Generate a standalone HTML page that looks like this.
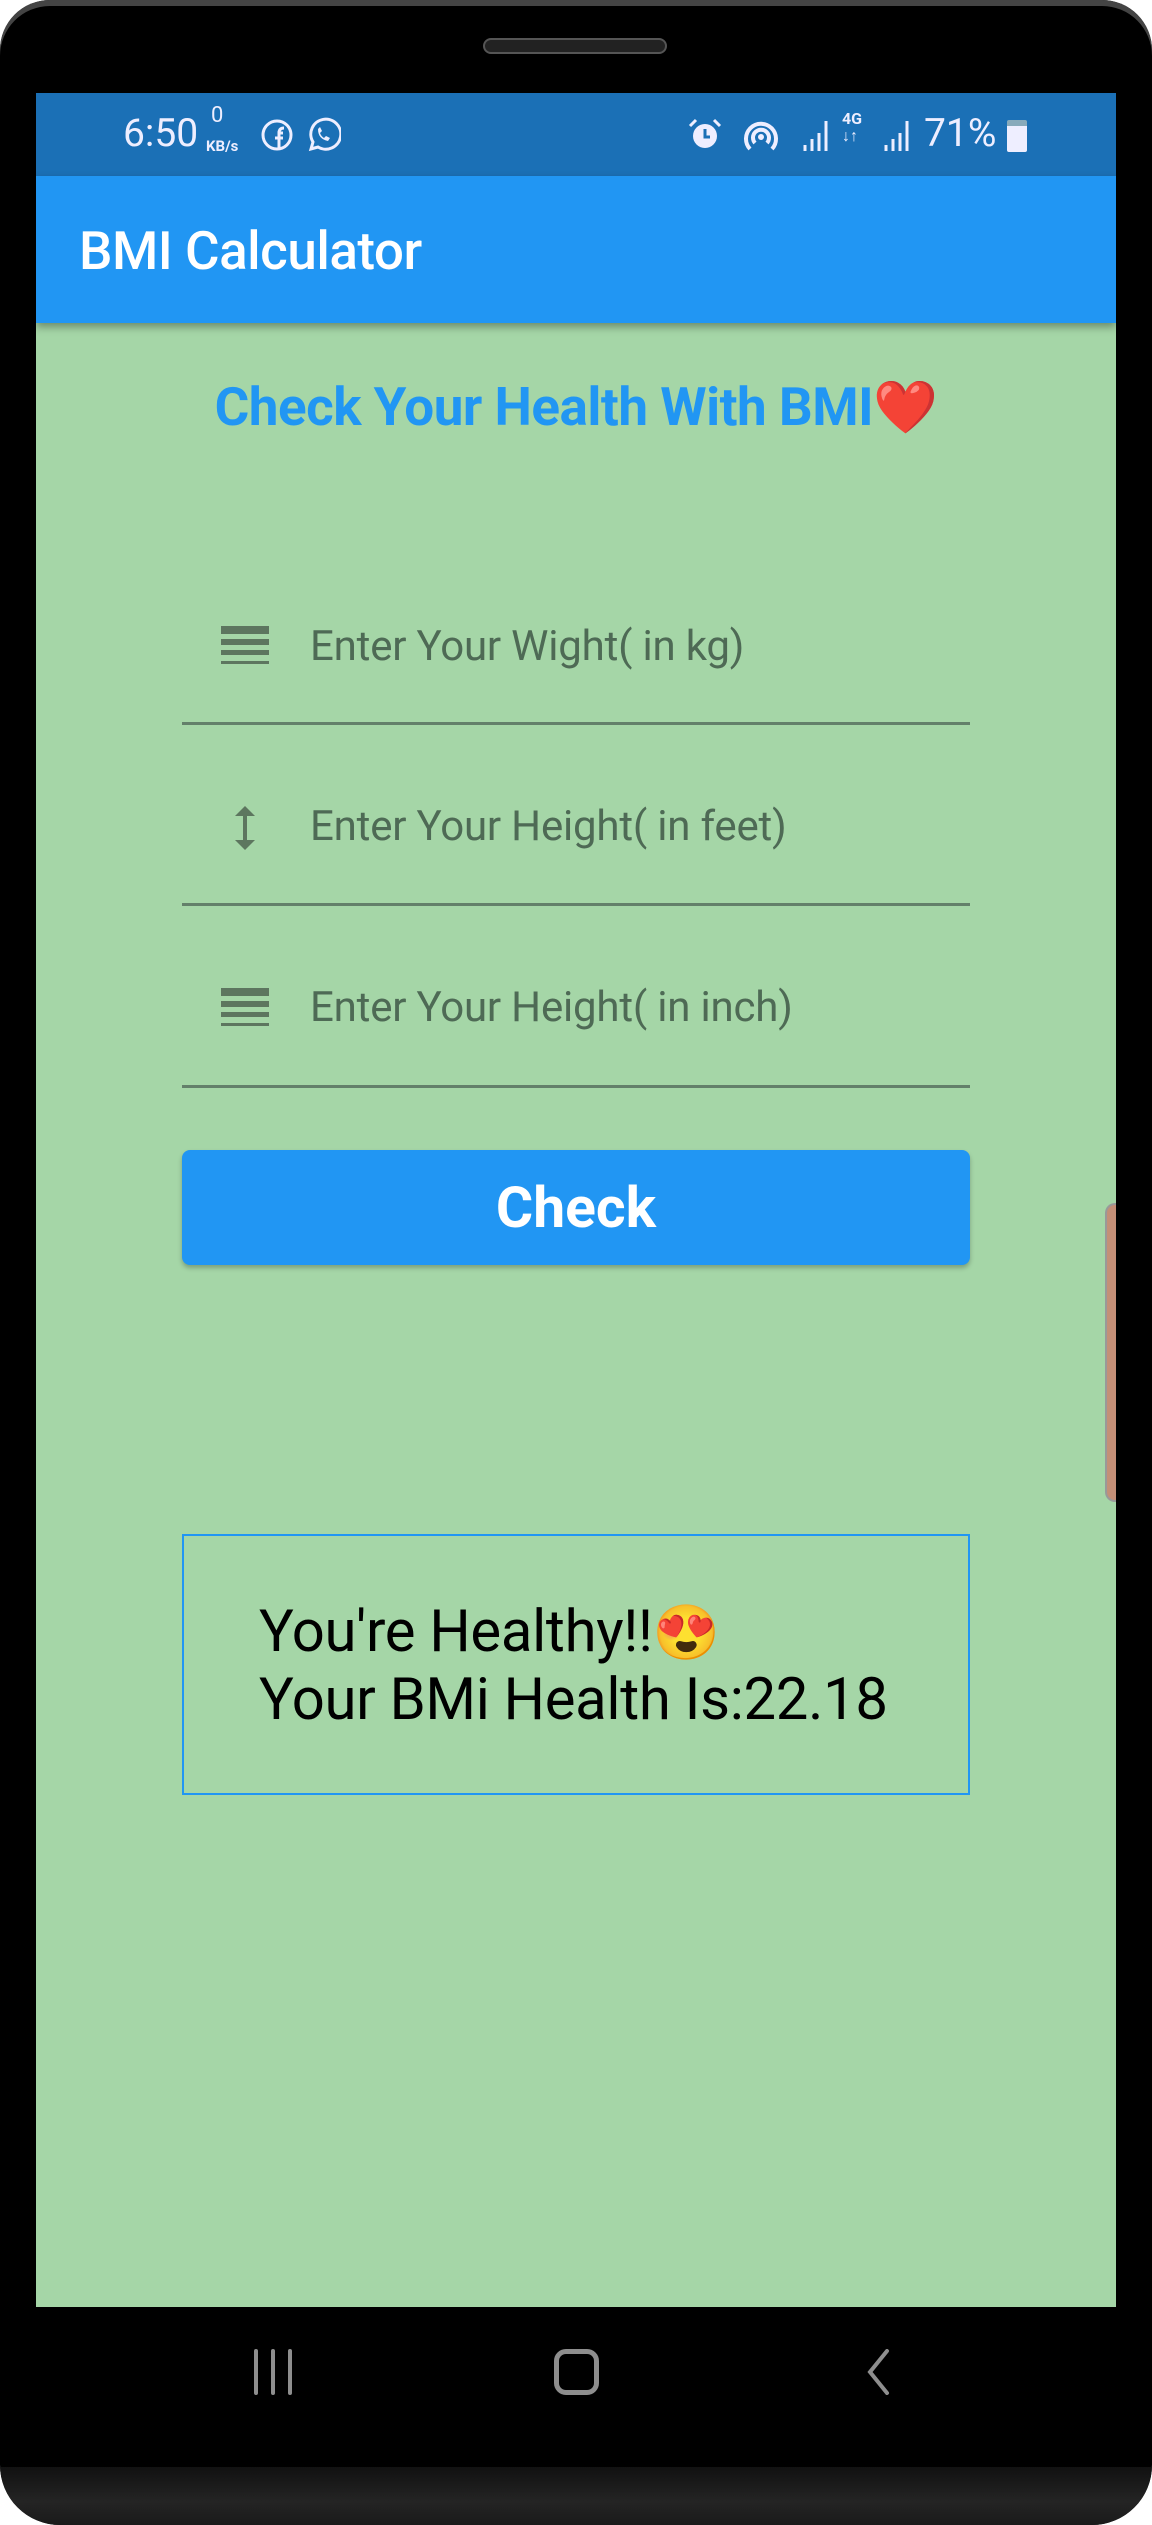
<!DOCTYPE html>
<html><head><meta charset="utf-8"><style>
*{margin:0;padding:0;box-sizing:border-box}
body{width:1152px;height:2525px;background:#fff;position:relative;overflow:hidden;font-family:"Roboto","Liberation Sans",sans-serif}
.frame{position:absolute;left:0;top:0;width:1152px;height:2525px;background:#000;border-radius:50px 50px 60px 60px;box-shadow:inset 0 6px 0 #444;overflow:hidden}
.chin{position:absolute;left:0;top:2467px;width:1152px;height:58px;background:linear-gradient(#111,#242424 60%,#1a1a1a)}
.spk{position:absolute;left:483px;top:38px;width:184px;height:16px;border-radius:8px;background:#222;border:2px solid #555}
.status{position:absolute;left:36px;top:93px;width:1080px;height:83px;background:#1b70b6;color:#eef;font-size:39px}
.appbar{position:absolute;left:36px;top:176px;width:1080px;height:147px;background:#2196f3;box-shadow:0 4px 8px rgba(0,0,0,.35);z-index:2}
.appbar span{position:absolute;left:43px;top:44px;color:#fff;font-size:53px;font-weight:500;letter-spacing:-0.5px}
.body{position:absolute;left:36px;top:323px;width:1080px;height:1984px;background:#a5d6a7}
.title{position:absolute;left:0;width:1152px;top:376px;text-align:center;color:#2196f3;font-weight:bold;font-size:53px;letter-spacing:-0.5px}
.field{position:absolute;left:182px;width:788px;border-bottom:3px solid #63806a;height:0}
.ph{position:absolute;left:310px;color:#4e6a55;font-size:42px;letter-spacing:-0.2px}
.btn{position:absolute;left:182px;top:1150px;width:788px;height:115px;background:#2196f3;border-radius:8px;box-shadow:0 3px 5px rgba(0,0,0,.25);color:#fff;font-weight:bold;font-size:57px;text-align:center;line-height:115px}
.res{position:absolute;left:182px;top:1534px;width:788px;height:261px;border:2px solid #2196f3}
.res div{position:absolute;left:75px;font-size:58px;color:#000;letter-spacing:-0.3px}
.tab{position:absolute;left:1105px;top:1203px;width:11px;height:299px;background:#c48f77;border-radius:10px 0 0 10px;border:2px solid #999;border-right:none}
.em{font-family:"Noto Color Emoji",sans-serif}
</style></head><body>
<div class="frame">
<div class="spk"></div>
<div class="status">
<span style="position:absolute;left:87px;top:17px">6:50</span>
<span style="position:absolute;left:175px;top:10px;font-size:22px">0</span>
<span style="position:absolute;left:170px;top:44px;font-size:15px;font-weight:bold">KB/s</span>
<svg style="position:absolute;left:224px;top:25px" width="34" height="34" viewBox="0 0 34 34"><circle cx="17" cy="17" r="14" fill="none" stroke="#eef" stroke-width="3"/><path d="M19 30V15h4M15 20h8M19 15q0-5 5-5" fill="none" stroke="#eef" stroke-width="3"/></svg>
<svg style="position:absolute;left:269px;top:24px" width="36" height="36" viewBox="0 0 36 36"><path d="M6 32l2-7a15 15 0 1 1 5 5z" fill="none" stroke="#eef" stroke-width="3"/><path d="M13 12q0 10 10 12l2-3-4-2-2 2q-3-2-4-5l2-2-2-4z" fill="#eef"/></svg>
<svg style="position:absolute;left:651px;top:24px" width="36" height="36" viewBox="0 0 36 36"><circle cx="18" cy="19" r="12" fill="#eef"/><path d="M18 12v8h5" stroke="#1b70b6" stroke-width="3" fill="none"/><path d="M3 9l6-6M33 9l-6-6" stroke="#eef" stroke-width="3"/></svg>
<svg style="position:absolute;left:705px;top:22px" width="40" height="40" viewBox="0 0 40 40"><path d="M9 34A15 15 0 1 1 31 34" fill="none" stroke="#eef" stroke-width="4"/><path d="M14 28A8 8 0 1 1 26 28" fill="none" stroke="#eef" stroke-width="4"/><circle cx="20" cy="22" r="3" fill="#eef"/></svg>
<svg style="position:absolute;left:766px;top:24px" width="28" height="36" viewBox="0 0 28 36"><path d="M3 34v-6M10 34v-12M17 34v-18M24 34V4" stroke="#eef" stroke-width="3"/></svg>
<span style="position:absolute;left:806px;top:17px;font-size:16px;font-weight:bold;line-height:17px">4G<br>↓↑</span>
<svg style="position:absolute;left:847px;top:24px" width="28" height="36" viewBox="0 0 28 36"><path d="M3 34v-6M10 34v-12M17 34v-18M24 34V4" stroke="#eef" stroke-width="3"/></svg>
<span style="position:absolute;left:888px;top:17px">71%</span>
<div style="position:absolute;left:971px;top:27px;width:20px;height:32px;background:#eef;border-radius:2px;border-top:6px solid #8ab"></div>
</div>
<div class="appbar"><span>BMI Calculator</span></div>
<div class="body"></div>
<div class="title">Check Your Health With BMI<span class="em" style="font-size:52px">❤️</span></div>

<svg style="position:absolute;left:221px;top:626px" width="48" height="44" viewBox="0 0 48 44"><rect x="0" y="0" width="48" height="8" fill="#5d765f"/><rect x="0" y="13" width="48" height="6" fill="#5d765f"/><rect x="0" y="24" width="48" height="5" fill="#5d765f"/><rect x="0" y="35" width="48" height="3" fill="#5d765f"/></svg>
<div class="ph" style="top:622px">Enter Your Wight( in kg)</div>
<div class="field" style="top:722px"></div>

<svg style="position:absolute;left:230px;top:804px" width="30" height="48" viewBox="0 0 30 48"><path d="M15 4v40" stroke="#5d765f" stroke-width="4"/><path d="M5 12L15 2 25 12zM5 36l10 10 10-10z" fill="#5d765f"/></svg>
<div class="ph" style="top:802px">Enter Your Height( in feet)</div>
<div class="field" style="top:903px"></div>

<svg style="position:absolute;left:221px;top:988px" width="48" height="44" viewBox="0 0 48 44"><rect x="0" y="0" width="48" height="8" fill="#5d765f"/><rect x="0" y="13" width="48" height="6" fill="#5d765f"/><rect x="0" y="24" width="48" height="5" fill="#5d765f"/><rect x="0" y="35" width="48" height="3" fill="#5d765f"/></svg>
<div class="ph" style="top:983px">Enter Your Height( in inch)</div>
<div class="field" style="top:1085px"></div>

<div class="btn">Check</div>
<div class="res">
<div style="top:62px">You're Healthy!!<span class="em" style="font-size:54px">😍</span></div>
<div style="top:130px">Your BMi Health Is:22.18</div>
</div>
<div class="tab"></div>

<svg style="position:absolute;left:250px;top:2349px" width="46" height="46" viewBox="0 0 46 46"><path d="M6 2v42M23 2v42M40 2v42" stroke="#8e8e8e" stroke-width="4" stroke-linecap="round"/></svg>
<div style="position:absolute;left:554px;top:2349px;width:45px;height:46px;border:5px solid #8e8e8e;border-radius:12px"></div>
<svg style="position:absolute;left:862px;top:2349px" width="30" height="46" viewBox="0 0 30 46"><path d="M25 2L8 23l17 21" fill="none" stroke="#8e8e8e" stroke-width="4" stroke-linecap="round"/></svg>
<div class="chin"></div>
</div>
</body></html>
